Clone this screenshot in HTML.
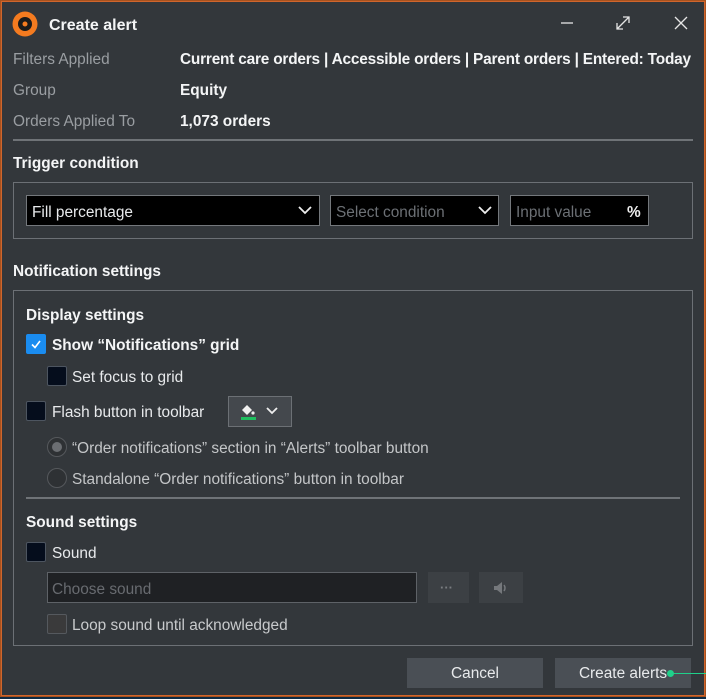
<!DOCTYPE html>
<html><head><meta charset="utf-8"><style>
*{box-sizing:border-box;margin:0;padding:0}
body{width:706px;height:699px;background:#0e2a44;position:relative;overflow:hidden;font-family:"Liberation Sans",sans-serif;font-size:15.4px;color:#e8eaec}
.frame{position:absolute;left:1px;top:1px;width:704px;height:695px;border:1px solid #d0652c;box-shadow:0 0 0 1px #a8521f;background:#33373b}
.a{position:absolute;white-space:nowrap;line-height:18px;transform:translateY(2px)}
.lbl{color:#9a9ea2}
.b{font-weight:bold;color:#f4f5f6}
.box{position:absolute;border:1px solid #6c7075}
.sel{position:absolute;background:#000;border:1px solid #74787c;height:31px}
.sel span{position:absolute;left:5px;top:8px;line-height:18px}
.cb{position:absolute;width:20px;height:20px;border:1px solid #4d5560;background:#050d1c;border-radius:2px}
.rd{position:absolute;width:20px;height:20px;border-radius:50%;border:1px solid #55585c;background:#2e3134}
.btn{position:absolute;background:#4a4f55;height:30px;text-align:center;line-height:32px;color:#e8eaec}
</style></head><body>
<div class="frame"></div>
<svg style="position:absolute;left:12px;top:11px" width="26" height="26"><circle cx="13" cy="13" r="12.5" fill="#f47b20"/><circle cx="13" cy="13" r="7" fill="#1b1b1b"/><circle cx="13" cy="13" r="2.5" fill="#f47b20"/></svg>
<div class="a b" style="left:49px;top:15px;font-size:16px">Create alert</div>
<svg style="position:absolute;left:558px;top:14px" width="132" height="18" stroke="#e6e6e6" stroke-width="1.3" fill="none">
<path d="M3 9H15"/>
<path d="M59 15L71 3M65 3H71V9M59 9V15H65"/>
<path d="M117 3L129 15M129 3L117 15"/></svg>
<div class="a lbl" style="left:13px;top:49px">Filters Applied</div>
<div class="a b" style="left:180px;top:49px;letter-spacing:-0.2px">Current care orders | Accessible orders | Parent orders | Entered: Today</div>
<div class="a lbl" style="left:13px;top:80px">Group</div>
<div class="a b" style="left:180px;top:80px">Equity</div>
<div class="a lbl" style="left:13px;top:111px">Orders Applied To</div>
<div class="a b" style="left:180px;top:111px">1,073 orders</div>
<div style="position:absolute;left:13px;top:139px;width:680px;height:2px;background:#6f7377"></div>
<div class="a b" style="left:13px;top:153px">Trigger condition</div>
<div class="box" style="left:13px;top:182px;width:680px;height:57px"></div>
<div class="sel" style="left:26px;top:195px;width:294px"><span>Fill percentage</span></div>
<div class="sel" style="left:330px;top:195px;width:169px"><span style="color:#6c7075">Select condition</span></div>
<div class="sel" style="left:510px;top:195px;width:139px"><span style="color:#6c7075">Input value</span><span style="left:116px;font-weight:bold;color:#eee">%</span></div>
<svg style="position:absolute;left:298px;top:205px" width="14" height="10"><path d="M1 2L7 8L13 2" stroke="#eee" stroke-width="1.8" fill="none"/></svg>
<svg style="position:absolute;left:478px;top:205px" width="14" height="10"><path d="M1 2L7 8L13 2" stroke="#eee" stroke-width="1.8" fill="none"/></svg>
<div class="a b" style="left:13px;top:261px">Notification settings</div>
<div class="box" style="left:13px;top:290px;width:680px;height:356px"></div>
<div class="a b" style="left:26px;top:305px">Display settings</div>
<div class="cb" style="left:26px;top:334px;background:#1a8cf0;border-color:#1a8cf0"><svg width="18" height="18"><path d="M5 9.5L8 12.5L13 6" stroke="#fff" stroke-width="1.6" fill="none"/></svg></div>
<div class="a b" style="left:52px;top:335px">Show “Notifications” grid</div>
<div class="cb" style="left:47px;top:366px"></div>
<div class="a" style="left:72px;top:367px">Set focus to grid</div>
<div class="cb" style="left:26px;top:401px"></div>
<div class="a" style="left:52px;top:402px">Flash button in toolbar</div>
<div style="position:absolute;left:228px;top:396px;width:64px;height:31px;background:#44484d;border:1px solid #6c7075"></div>
<svg style="position:absolute;left:238px;top:401px" width="48" height="22"><path d="M4 9L9 4L14 9L9 14Z" fill="#f0f0f0"/><circle cx="15" cy="12" r="1.6" fill="#f0f0f0"/><rect x="3" y="16" width="15" height="3" fill="#1fbf5f"/><path d="M29 7L34 12L39 7" stroke="#eee" stroke-width="1.8" fill="none"/></svg>
<div class="rd" style="left:47px;top:437px"><div style="position:absolute;left:4px;top:4px;width:10px;height:10px;border-radius:50%;background:#6b6e72"></div></div>
<div class="a lbl" style="left:72px;top:438px;color:#c4c6c8">“Order notifications” section in “Alerts” toolbar button</div>
<div class="rd" style="left:47px;top:468px"></div>
<div class="a lbl" style="left:72px;top:469px;color:#c4c6c8">Standalone “Order notifications” button in toolbar</div>
<div style="position:absolute;left:26px;top:497px;width:654px;height:2px;background:#6f7377"></div>
<div class="a b" style="left:26px;top:512px">Sound settings</div>
<div class="cb" style="left:26px;top:542px"></div>
<div class="a" style="left:52px;top:543px">Sound</div>
<div style="position:absolute;left:47px;top:572px;width:370px;height:31px;background:#1f2124;border:1px solid #5e6267"></div>
<div class="a" style="left:52px;top:579px;color:#686b70">Choose sound</div>
<div style="position:absolute;left:428px;top:572px;width:41px;height:31px;background:#3c4044"></div>
<div class="a" style="left:440px;top:577px;color:#7a7d81;font-weight:bold;font-size:13px">···</div>
<div style="position:absolute;left:479px;top:572px;width:44px;height:31px;background:#3c4044"></div>
<svg style="position:absolute;left:492px;top:579px" width="18" height="18"><path d="M2 7H5L10 3V15L5 11H2Z" fill="#75787c"/><path d="M12 6Q14 9 12 12" stroke="#75787c" stroke-width="1.5" fill="none"/></svg>
<div class="cb" style="left:47px;top:614px;background:#3a3a3b;border-color:#55595e"></div>
<div class="a" style="left:72px;top:615px;color:#c8cacc">Loop sound until acknowledged</div>
<div class="btn" style="left:407px;top:658px;width:136px">Cancel</div>
<div class="btn" style="left:555px;top:658px;width:136px">Create alerts</div>
<div style="position:absolute;left:667px;top:670px;width:7px;height:7px;border-radius:50%;background:#1fd08a"></div>
<div style="position:absolute;left:672px;top:673px;width:34px;height:1px;background:#1fd08a"></div>
</body></html>
